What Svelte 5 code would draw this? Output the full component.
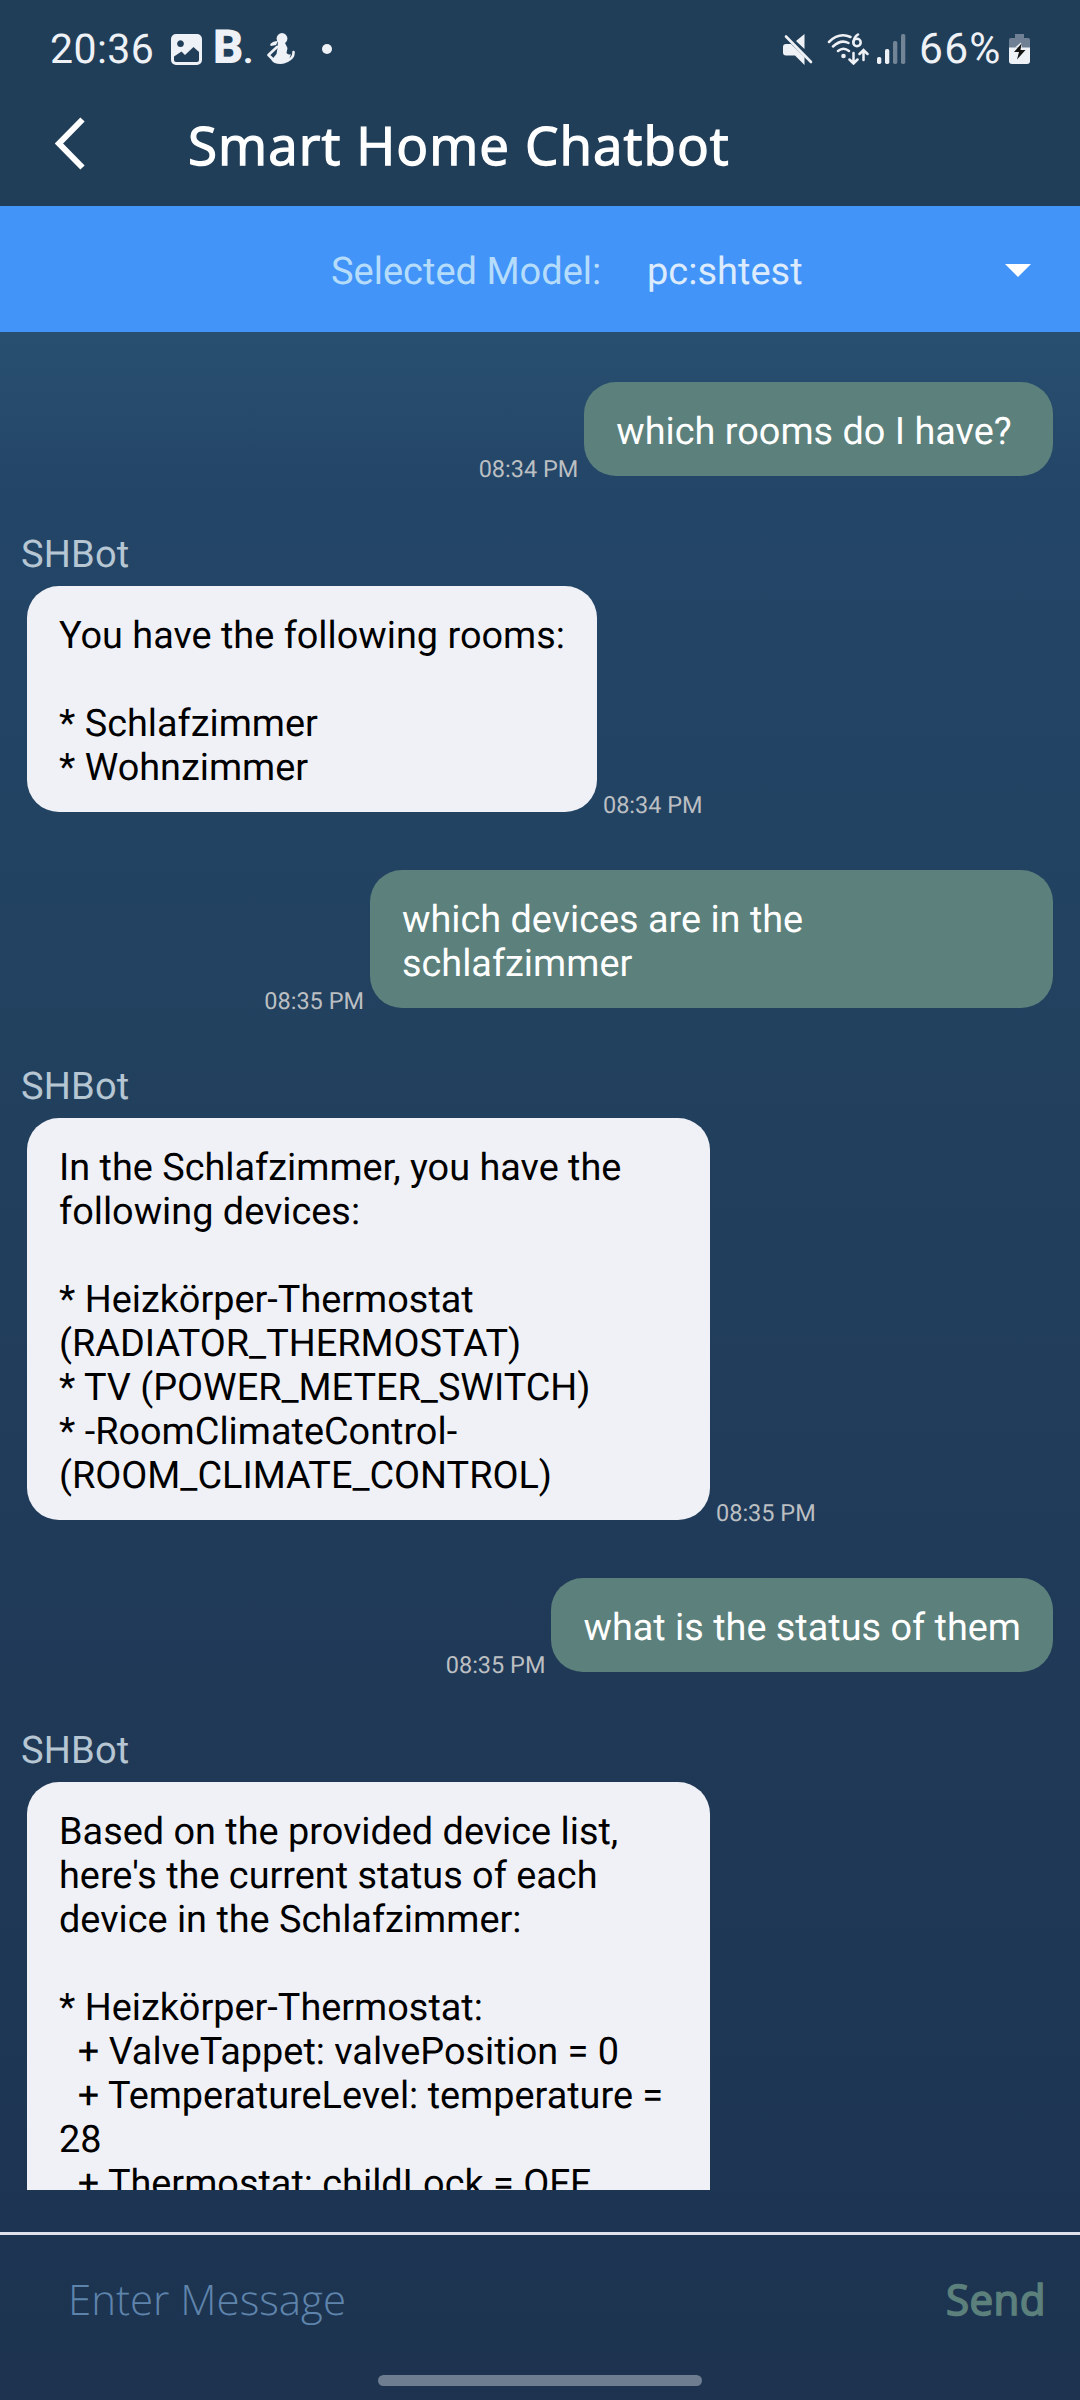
<script>
  const messages = [
    { from: 'me', time: '08:34 PM', text: 'which rooms do I have?\u00a0' },
    { from: 'bot', time: '08:34 PM', text: 'You have the following rooms:\n\n* Schlafzimmer\n* Wohnzimmer' },
    { from: 'me', time: '08:35 PM', text: 'which devices are in the schlafzimmer' },
    {
      from: 'bot',
      time: '08:35 PM',
      text: 'In the Schlafzimmer, you have the following devices:\n\n* Heizkörper-Thermostat (RADIATOR_THERMOSTAT)\n* TV (POWER_METER_SWITCH)\n* -RoomClimateControl-\n(ROOM_CLIMATE_CONTROL)'
    },
    { from: 'me', time: '08:35 PM', text: 'what is the status of them' },
    {
      from: 'bot',
      time: '08:35 PM',
      text: "Based on the provided device list, here's the current status of each device in the Schlafzimmer:\n\n* Heizkörper-Thermostat:\n  + ValveTappet: valvePosition = 0\n  + TemperatureLevel: temperature = 28\n  + Thermostat: childLock = OFF"
    }
  ];
</script>

<div class="screen">
  <header>
    <div class="status">
      <span class="clock">20:36</span>
      <svg class="photo" width="31" height="31" viewBox="0 0 31 31">
        <path fill="#eef1f5" fill-rule="evenodd" d="M5 0h21a5 5 0 0 1 5 5v21a5 5 0 0 1-5 5H5a5 5 0 0 1-5-5V5a5 5 0 0 1 5-5zM9.500 6.300a3.400 3.400 0 1 0 .01 0zM3 22.500V26q0 2 2 2h21q2 0 2-2V18l-5.500-5-8.500 8-3.500-3.500z" />
      </svg>
      <span class="bold-b">B<span class="stop">.</span></span>
      <svg class="figure" width="28" height="32" viewBox="0 0 28 32">
        <g fill="#eef1f5">
          <circle cx="15" cy="5.500" r="5.400" />
          <path d="M11 8l7 2 2.500 5-1 5q2.500 2.500 4.500 1l-2.500 7q-3 3-8 3-7 0-9-4l5-6 1-6z" />
          <path d="M3 12q2-4 8-4l-2 4-5 1z" />
        </g>
        <path d="M10 14L1.500 22l6 6M20 28q7-3 6.500-9" fill="none" stroke="#eef1f5" stroke-width="2.600" stroke-linecap="round" stroke-linejoin="round" />
      </svg>
      <span class="dot"></span>
      <span class="spacer"></span>
      <svg class="mute" width="30" height="31" viewBox="0 0 30 31">
        <path fill="#eef1f5" d="M21.500 0v15L13 7zM3 10h5l13.500 13v8L12 21.500H3q-3 0-3-3V13q0-3 3-3z" />
        <path d="M3 2.500L28 28" stroke="#eef1f5" stroke-width="2.600" stroke-linecap="round" />
      </svg>
      <svg class="wifi" width="42" height="32" viewBox="0 0 42 32">
        <g fill="none" stroke="#eef1f5" stroke-width="2.500" stroke-linecap="round">
          <path d="M2 9Q12-1 23.500 4M6 13.500q8-7.500 15.500-3.500M11 18q5.500-4.500 11 0" />
          <circle cx="30" cy="9.500" r="3.700" />
          <path d="M31 1.500Q27 4 26.500 9M26.500 20v9.500M22.500 26.500l4 4 4-4M36.500 27v-9.500M32.500 21l4-4 4 4" />
        </g>
        <circle cx="16.500" cy="23" r="2.300" fill="#eef1f5" />
      </svg>
      <svg class="signal" width="29" height="31" viewBox="0 0 29 31">
        <g fill="#eef1f5">
          <rect x="0" y="23" width="4.300" height="7" rx="1.700" />
          <rect x="8" y="15" width="4.300" height="15" rx="1.700" />
          <rect x="16" y="7" width="4.300" height="23" rx="1.700" opacity=".4" />
          <rect x="24" y="0" width="4.300" height="30" rx="1.700" opacity=".4" />
        </g>
      </svg>
      <span class="percent">66%</span>
      <svg class="battery" width="21" height="31" viewBox="0 0 21 31">
        <path fill="#6f8094" d="M6 0h9v4h4q2 0 2 2v8H0V6q0-2 2-2h4z" />
        <path fill="#eef1f5" d="M0 13.500h21V27q0 3-3 3H3q-3 0-3-3z" />
        <path fill="#eef1f5" d="M12 8.500l-6 5h7z" />
        <path fill="#151515" d="M12.500 9.500L5 18h5l-2 7.500L16.500 16h-5z" />
      </svg>
    </div>
    <div class="title-row">
      <svg class="back" width="32" height="54" viewBox="0 0 32 54">
        <path d="M27.500 2.500L4 26.500l23.500 24" fill="none" stroke="#fff" stroke-width="6" />
      </svg>
      <h1>Smart Home Chatbot</h1>
    </div>
  </header>

  <div class="model">
    <span class="label">Selected Model:</span>
    <span class="value">pc:shtest</span>
    <svg width="26" height="13" viewBox="0 0 26 13"><path d="M0 0h26L13 13z" fill="#fff" /></svg>
  </div>

  <main>
    {#each messages as m}
      {#if m.from === 'bot'}<div class="name">SHBot</div>{/if}
      <div class="row {m.from}">
        <div class="bubble">{m.text}</div>
        <span class="time">{m.time}</span>
      </div>
    {/each}
  </main>

  <footer>
    <span class="placeholder">Enter Message</span>
    <span class="send">Send</span>
  </footer>
  <div class="nav"><span></span></div>
</div>

<style>
  :global(body) {
    margin: 0;
  }
  .screen {
    width: 1080px;
    height: 2400px;
    display: flex;
    flex-direction: column;
    overflow: hidden;
    font-family: Roboto, sans-serif;
    text-rendering: geometricPrecision;
    background: linear-gradient(#284f70 332px, #234567 500px, #22415f 1040px, #1f3957 1700px, #1c3450 2351px);
  }
  header {
    height: 206px;
    background: #213e59;
  }
  .status {
    height: 98px;
    box-sizing: border-box;
    padding: 0 50px;
    display: flex;
    align-items: center;
    color: #eef1f5;
  }
  .clock,
  .percent {
    font-size: 41px;
    line-height: 48px;
    letter-spacing: 0.4px;
    padding-top: 1px;
  }
  .clock {
    width: 105px;
  }
  .photo {
    margin-left: 16px;
  }
  .bold-b {
    font: 900 47px/48px Roboto, sans-serif;
    width: 38px;
    margin-left: 11px;
    padding-top: 2px;
  }
  .stop {
    font-size: 32px;
  }
  .figure {
    margin-left: 16px;
  }
  .dot {
    width: 10px;
    height: 10px;
    border-radius: 50%;
    background: #eef1f5;
    margin-left: 27px;
  }
  .spacer {
    flex: 1;
  }
  .wifi {
    margin-left: 14px;
  }
  .signal {
    margin-left: 8px;
  }
  .percent {
    margin-left: 13px;
    width: 86px;
    font-size: 42.5px;
    letter-spacing: 1.3px;
  }
  .battery {
    margin-left: 4px;
  }
  .title-row {
    height: 92px;
    display: flex;
    align-items: center;
  }
  .back {
    margin-left: 55px;
  }
  h1 {
    margin: 0 0 0 101px;
    padding-top: 2px;
    font: 400 53px/62px 'Open Sans', sans-serif;
    letter-spacing: 1.05px;
    -webkit-text-stroke: 1.3px #fff;
    color: #fff;
    white-space: nowrap;
  }
  .model {
    height: 126px;
    flex: none;
    background: #4294f8;
    display: flex;
    align-items: center;
    font-size: 38px;
  }
  .label,
  .value {
    padding-top: 6px;
  }
  .label {
    margin-left: 331px;
    width: 316px;
    color: #b5dcfb;
  }
  .value {
    flex: 1;
    color: #dcebfd;
  }
  .model svg {
    margin: 2px 49px 0 0;
  }
  main {
    height: 1858px;
    flex: none;
    box-sizing: border-box;
    padding-top: 50px;
    overflow: hidden;
  }
  .name {
    margin: -2px 0 8px 21px;
    font-size: 38px;
    line-height: 46px;
    letter-spacing: 0.2px;
    color: #b6c6d3;
  }
  .row {
    display: flex;
    align-items: flex-end;
    gap: 6px;
    margin: 0 27px 58px;
  }
  .row.me {
    flex-direction: row-reverse;
  }
  .bubble {
    box-sizing: border-box;
    max-width: 683px;
    padding: 28px 32px 22px;
    border-radius: 32px;
    font-size: 37.85px;
    line-height: 44px;
    white-space: pre-wrap;
    background: #f0f1f7;
    color: #000;
  }
  .me .bubble {
    background: #5c807b;
    color: #fff;
  }
  .time {
    font-size: 23.5px;
    line-height: 28px;
    margin-bottom: -7px;
    color: #bcbfc2;
    white-space: nowrap;
  }
  footer {
    margin-top: 42px;
    height: 119px;
    flex: none;
    box-sizing: border-box;
    border-top: 3px solid #dfe1ea;
    padding: 14px 34px 0 68px;
    display: flex;
    align-items: center;
    justify-content: space-between;
    font-family: 'Open Sans', sans-serif;
    font-size: 42px;
    line-height: 50px;
  }
  .placeholder {
    font-weight: 300;
    color: #5f84ac;
  }
  .send {
    font-weight: 400;
    letter-spacing: 0.5px;
    -webkit-text-stroke: 1.7px #5c807b;
    color: #5c807b;
  }
  .nav {
    flex: 1;
    background: #1d3350;
    display: flex;
    justify-content: center;
    padding-top: 24px;
  }
  .nav span {
    width: 324px;
    height: 11px;
    border-radius: 5.5px;
    background: #6f7d90;
  }
</style>
